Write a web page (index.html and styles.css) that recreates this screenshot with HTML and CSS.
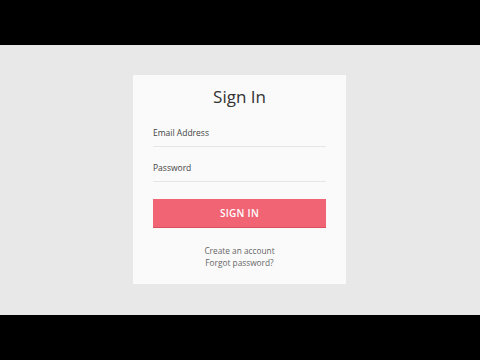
FILE: index.html
```html
<!doctype html>
<html>
<head>
	<meta charset="utf-8" />
	<title>Sign In</title>
	<link rel="stylesheet" href="styles.css">
</head>
<body>
	<div class="stage">
		<div class="card">
			<h1>Sign In</h1>
			<div class="field first"><label>Email Address</label></div>
			<div class="field"><label>Password</label></div>
			<button class="submit">SIGN IN</button>
			<div class="links">
				<a href="#">Create an account</a>
				<a href="#">Forgot password?</a>
			</div>
		</div>
	</div>
</body>
</html>
```

FILE: styles.css
```css
html, body { margin: 0; padding: 0; background: #000; }
body { padding: 45px 0; font-family: 'Open Sans', sans-serif; }
.stage { height: 270px; background: #e8e8e8; display: flex; justify-content: center; align-items: flex-start; }
.card { width: 173px; margin: 30px 1px 0 0; padding: 10px 20px 15px; background: #fafafa; display: flex; flex-direction: column; }
h1 { margin: 0; font-size: 17px; line-height: 24px; font-weight: 400; color: #333; text-align: center; }
.field { padding: 14px 0 6px; border-bottom: 1px solid #e6e6e6; }
.field.first { padding-top: 17px; }
label { display: block; font-size: 8.5px; line-height: 14px; color: #444; }
.submit { margin-top: 17px; height: 29px; border: 0; border-bottom: 1px solid #d9505f; background: #f06474; color: #fff; font-family: 'Open Sans', sans-serif; font-size: 10px; font-weight: 600; letter-spacing: 0.3px; padding: 0; }
.links { margin-top: 17px; display: flex; flex-direction: column; align-items: center; }
.links a { font-size: 8.3px; line-height: 12px; color: #666; text-decoration: none; }
```
